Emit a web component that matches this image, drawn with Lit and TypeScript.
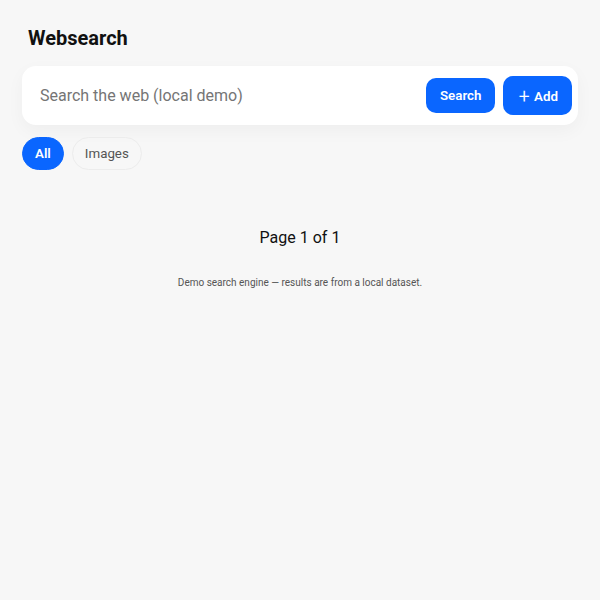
import { LitElement, css, html } from "lit";
import { customElement, state } from "lit/decorators.js";
import { classMap } from "lit/directives/class-map.js";

const TABS = ["All", "Images"];

@customElement("app-root")
export class AppRoot extends LitElement {
  static styles = css`
    :host {
      display: block;
      box-sizing: border-box;
      min-height: 100vh;
      padding: 26px 22px;
      background: #f7f7f7;
      color: #111;
      font-family: Roboto, "Noto Sans CJK SC", sans-serif;
    }
    .brand {
      margin: 0 6px 16px;
      font-size: 20px;
      line-height: 24px;
      font-weight: 700;
    }
    .search {
      display: flex;
      align-items: center;
      gap: 8px;
      padding: 10px 6px;
      border-radius: 14px;
      background: #fff;
      box-shadow: 0 6px 18px rgba(0, 0, 0, 0.04);
    }
    .query {
      flex: 1;
      min-width: 0;
      padding: 8px 12px;
      border: 0;
      outline: none;
      background: transparent;
      font: inherit;
      font-size: 16px;
    }
    .query::placeholder {
      color: #757575;
    }
    /* buttons and tabs keep the browser's own button text size */
    .button {
      padding: 10px 14px;
      border: 0;
      border-radius: 10px;
      background: #0a66ff;
      color: #fff;
      font-family: inherit;
      font-weight: 600;
      cursor: pointer;
    }
    .tabs {
      display: flex;
      gap: 8px;
      margin-top: 12px;
    }
    .tab {
      padding: 8px 12px;
      border: 1px solid #ececec;
      border-radius: 999px;
      background: transparent;
      color: #555;
      font-family: inherit;
      cursor: pointer;
    }
    .tab.active {
      border-color: #0a66ff;
      background: #0a66ff;
      color: #fff;
      font-weight: 600;
    }
    .pager {
      margin-top: 58px;
      font-size: 16px;
      line-height: 20px;
      text-align: center;
    }
    .footer {
      margin-top: 28px;
      color: #555;
      font-size: 10px;
      line-height: 14px;
      text-align: center;
    }
  `;

  @state()
  private _tab: string = TABS[0];

  #handleSubmit(event: Event) {
    event.preventDefault();
  }

  render() {
    return html`
      <h1 class="brand">Websearch</h1>
      <form class="search" role="search" @submit="${this.#handleSubmit}">
        <input
          class="query"
          type="text"
          aria-label="Search the web"
          placeholder="Search the web (local demo)"
        />
        <button class="button" type="submit">Search</button>
        <button class="button" type="button">＋ Add</button>
      </form>
      <nav class="tabs">
        ${TABS.map(
          (tab) => html`<button
            type="button"
            class="tab ${classMap({ active: tab === this._tab })}"
            @click="${() => (this._tab = tab)}"
          >
            ${tab}
          </button>`
        )}
      </nav>
      <div class="pager">Page 1 of 1</div>
      <footer class="footer">
        Demo search engine — results are from a local dataset.
      </footer>
    `;
  }
}

declare global {
  interface HTMLElementTagNameMap {
    "app-root": AppRoot;
  }
}
